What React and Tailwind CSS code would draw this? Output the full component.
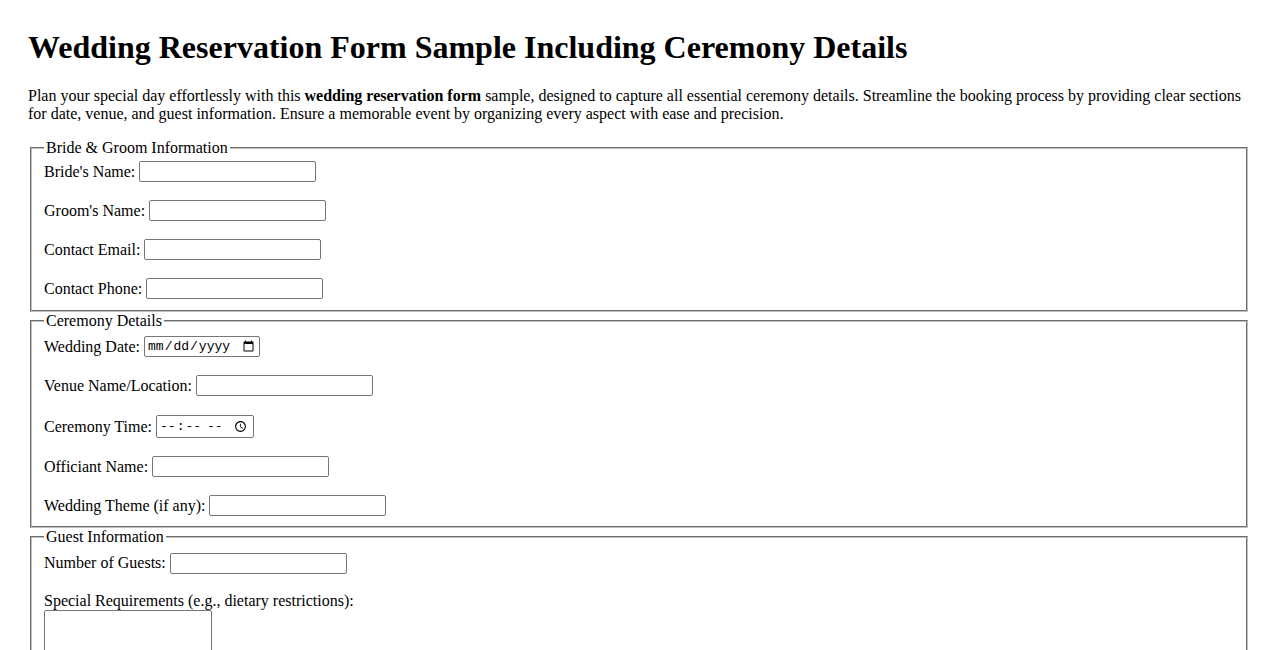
import React from 'react';

const inputCls =
  'box-border h-[21px] border border-[#767676] rounded-[2px] bg-white px-[2px] py-[1px] text-[13.33px] font-["Liberation_Sans",Arial,sans-serif] align-middle';

function Row({ label, children }) {
  return (
    <div className="flex items-center h-[21px]">
      <label className="mr-[4px]">{label}</label>
      {children}
    </div>
  );
}

function TextRow({ label, type = 'text', width = 'w-[177px]' }) {
  return (
    <Row label={label}>
      <input type={type} className={`${inputCls} ${width}`} />
    </Row>
  );
}

function Section({ title, pad = 'pt-[5.6px] pb-[10px]', children }) {
  return (
    <fieldset className={`mx-[2px] border-2 [border-style:groove] border-[#c0c0c0] px-[12px] min-w-0 ${pad}`}>
      <legend className="px-[2px]">{title}</legend>
      <div className="flex flex-col gap-[18px]">{children}</div>
    </fieldset>
  );
}

export default function App() {
  return (
    <div className="bg-white text-black px-[28px] pt-[29px] text-[16px] leading-[normal] font-['Liberation_Serif','Times_New_Roman',serif]">
      <h1 className="text-[32px] font-bold mb-[21.44px]">
        Wedding Reservation Form Sample Including Ceremony Details
      </h1>
      <p className="mb-[16px]">
        Plan your special day effortlessly with this <b>wedding reservation form</b> sample, designed to
        capture all essential ceremony details. Streamline the booking process by providing clear sections
        for date, venue, and guest information. Ensure a memorable event by organizing every aspect with
        ease and precision.
      </p>
      <form>
        <Section title="Bride & Groom Information" pad="pt-[3.6px] pb-[11px]">
          <TextRow label="Bride's Name:" />
          <TextRow label="Groom's Name:" />
          <TextRow label="Contact Email:" type="email" />
          <TextRow label="Contact Phone:" type="tel" />
        </Section>
        <Section title="Ceremony Details" pad="pt-[6px] pb-[10px]">
          <Row label="Wedding Date:">
            <input
              type="date"
              className={`${inputCls} w-[116px] font-['Liberation_Mono',monospace] text-[13px]`}
            />
          </Row>
          <TextRow label="Venue Name/Location:" />
          <div className="flex items-center h-[23px] mt-[1px]">
            <label className="mr-[4px]">Ceremony Time:</label>
            <input
              type="time"
              className={`${inputCls} h-[23px] w-[98px] font-['Liberation_Mono',monospace] text-[13px]`}
            />
          </div>
          <TextRow label="Officiant Name:" />
          <TextRow label="Wedding Theme (if any):" />
        </Section>
        <Section title="Guest Information" pad="pt-[6.6px] pb-[10px]">
          <TextRow label="Number of Guests:" type="number" />
          <div>
            <label className="block">Special Requirements (e.g., dietary restrictions):</label>
            <textarea className="block box-border w-[168px] h-[70px] border border-[#767676] rounded-[2px] resize-none" />
          </div>
        </Section>
      </form>
    </div>
  );
}
